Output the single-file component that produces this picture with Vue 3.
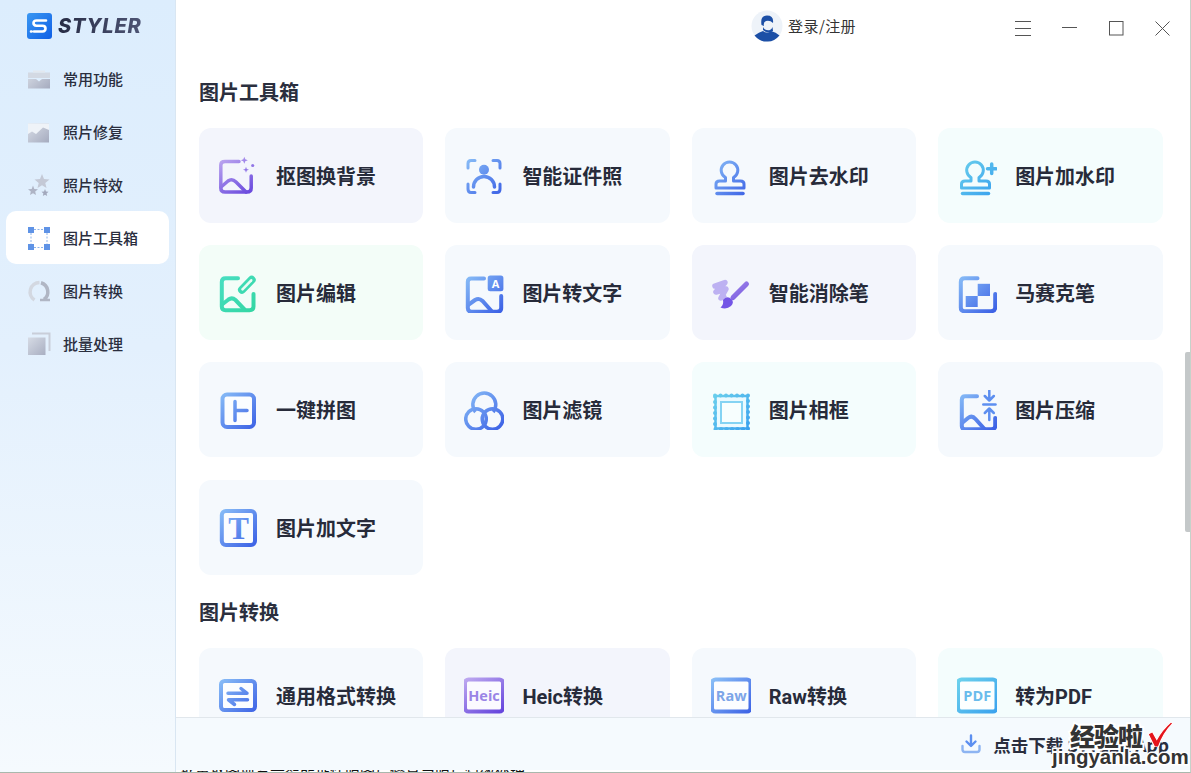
<template>
  <div class="window">
    <svg class="sprites" width="0" height="0" aria-hidden="true">
      <defs>
        <linearGradient id="g-blue" gradientUnits="userSpaceOnUse" x1="0" y1="0" x2="38" y2="40">
          <stop offset="0" stop-color="#8ec4f8" />
          <stop offset="1" stop-color="#3a5fe5" />
        </linearGradient>
        <linearGradient id="g-purple" gradientUnits="userSpaceOnUse" x1="4" y1="0" x2="30" y2="40">
          <stop offset="0" stop-color="#bfaaf0" />
          <stop offset="1" stop-color="#6746dd" />
        </linearGradient>
        <linearGradient id="g-green" gradientUnits="userSpaceOnUse" x1="0" y1="0" x2="38" y2="40">
          <stop offset="0" stop-color="#4adfc4" />
          <stop offset="1" stop-color="#33d6a2" />
        </linearGradient>
        <linearGradient id="g-cyan" gradientUnits="userSpaceOnUse" x1="0" y1="0" x2="40" y2="40">
          <stop offset="0" stop-color="#6fd4ec" />
          <stop offset="1" stop-color="#379fee" />
        </linearGradient>
        <linearGradient id="g-grey" gradientUnits="userSpaceOnUse" x1="0" y1="0" x2="22" y2="24">
          <stop offset="0" stop-color="#dfe4ec" />
          <stop offset="1" stop-color="#a3a9bd" />
        </linearGradient>
      </defs>

      <symbol id="i-cutout" viewBox="0 0 40 40">
        <g fill="none" stroke="url(#g-purple)" stroke-width="3.5" stroke-linecap="round">
          <path d="M21 5.500H7Q2.800 5.500 2.800 9V32Q2.800 36 7 36H29Q33.200 36 33.200 32V20" />
          <path d="M3 31L10 25Q14 22 18 26L28 36" />
        </g>
        <path fill="url(#g-purple)" d="M26.300 0.800L27.300 3.300L29.800 4.300L27.300 5.300L26.300 7.800L25.300 5.300L22.800 4.300L25.300 3.300ZM28 10.800L28.800 13L31 13.800L28.800 14.600L28 16.800L27.200 14.600L25 13.800L27.200 13Z" />
        <circle cx="34.700" cy="9.500" r="1.600" fill="url(#g-purple)" />
      </symbol>

      <symbol id="i-idphoto" viewBox="0 0 40 40">
        <g fill="none" stroke="url(#g-blue)" stroke-width="3" stroke-linecap="round">
          <path d="M11 4.500H7Q4 4.500 4 7.500V12M29 4.500H33Q36 4.500 36 7.500V12M4 28V33Q4 36.500 7 36.500H11M36 28V33Q36 36.500 33 36.500H29" />
          <path stroke-width="3.500" d="M9.500 31A10.500 10.500 0 0 1 30.500 31" />
        </g>
        <circle cx="20" cy="13.800" r="5" fill="url(#g-blue)" />
      </symbol>

      <symbol id="i-stamp" viewBox="0 0 40 40">
        <g fill="none" stroke="url(#g-blue)" stroke-width="3" stroke-linejoin="round" stroke-linecap="round">
          <path d="M14.500 25V21.500A8.300 8.300 0 1 1 22.500 21.500V25H29.500Q33 25 33 28V32H5V28Q5 25 8.500 25Z" />
          <path stroke-width="3.500" d="M6 37.500H32" />
        </g>
      </symbol>

      <symbol id="i-stamp-add" viewBox="0 0 40 40">
        <g fill="none" stroke="url(#g-cyan)" stroke-width="3" stroke-linejoin="round" stroke-linecap="round">
          <path d="M14 25V21.500A8.300 8.300 0 1 1 22 21.500V25H29Q32.500 25 32.500 28V32H4.500V28Q4.500 25 8 25Z" />
          <path stroke-width="3.500" d="M5.500 37.500H31.500" />
          <path stroke-width="3.500" d="M30.500 12.800H39M34.700 8V17.500" />
        </g>
      </symbol>

      <symbol id="i-edit" viewBox="0 0 40 40">
        <g fill="none" stroke="url(#g-green)" stroke-width="4" stroke-linecap="round">
          <path d="M20 5.300H7.500Q3.800 5.300 3.800 9V33.500Q3.800 37.200 7.500 37.200H31.500Q35.500 37.200 35.500 33.500V21" />
          <path d="M4 31.500L10.500 26.500Q14 24 17.500 27L26.500 36.500" />
          <path stroke-width="8" d="M24 16.800L33.700 6.800" />
          <path stroke="#eafcf5" stroke-width="2.600" d="M24.500 16.300L33.200 7.300" />
        </g>
      </symbol>

      <symbol id="i-totext" viewBox="0 0 40 40">
        <g fill="none" stroke="url(#g-blue)" stroke-width="4" stroke-linecap="round">
          <path d="M20 5.500H7Q3.800 5.500 3.800 9V35Q3.800 38.700 7.500 38.700H33Q37.200 38.700 37.200 35V23" />
          <path d="M4 32L11 27Q15 24.500 18.500 28L27.500 38" />
        </g>
        <rect x="23.700" y="2.500" width="15.700" height="15.700" rx="2.500" fill="url(#g-blue)" />
      </symbol>

      <symbol id="i-brush" viewBox="0 0 40 40">
        <g fill="none" stroke="#bdb1f2" stroke-width="5.500" stroke-linecap="round" stroke-linejoin="round">
          <path d="M4 13L14 9.500L5 19L15 16L10 25L13 24" />
        </g>
        <path d="M22 24.500L35.500 11" fill="none" stroke="url(#g-purple)" stroke-width="5" stroke-linecap="round" />
        <path d="M12 27Q16 22 20.500 26Q23.500 29.500 20 33Q15.500 37 9.500 34.500Q13 32 12 27Z" fill="#7354e6" />
      </symbol>

      <symbol id="i-mosaic" viewBox="0 0 40 40">
        <path fill="none" stroke="url(#g-blue)" stroke-width="4" stroke-linecap="round" d="M20.500 5.300H7.500Q3.800 5.300 3.800 9V34.500Q3.800 38.200 7.500 38.200H34Q38.200 38.200 38.200 34.500V21" />
        <rect x="20.700" y="10.800" width="12.300" height="12.200" fill="url(#g-blue)" />
        <rect x="8.700" y="23" width="12" height="11" fill="url(#g-blue)" />
      </symbol>

      <symbol id="i-collage" viewBox="0 0 40 40">
        <rect x="4.500" y="4.500" width="31.500" height="32.500" rx="4.500" fill="#fbfdff" stroke="url(#g-blue)" stroke-width="4" />
        <path d="M17 11.500V30.500M17 20.500H29" fill="none" stroke="url(#g-blue)" stroke-width="3.500" stroke-linecap="round" />
      </symbol>

      <symbol id="i-filter" viewBox="0 0 40 40">
        <g fill="none" stroke="url(#g-blue)" stroke-width="3.500">
          <path d="M11.500 22A11.500 11.500 0 1 1 29.100 22" />
          <circle cx="12" cy="29" r="10.300" />
          <circle cx="28.500" cy="29" r="10.300" />
        </g>
      </symbol>

      <symbol id="i-frame" viewBox="0 0 40 40">
        <rect x="4.500" y="6" width="32" height="32.500" fill="#eafaff" stroke="url(#g-cyan)" stroke-width="2.500" />
        <rect x="4" y="5.500" width="33" height="33.500" fill="none" stroke="url(#g-cyan)" stroke-width="4" stroke-linecap="round" stroke-dasharray="0 5.500" />
        <rect x="10" y="12" width="21" height="21" fill="#f7fefe" stroke="#84d3f3" stroke-width="2" />
      </symbol>

      <symbol id="i-compress" viewBox="0 0 40 40">
        <g fill="none" stroke="url(#g-blue)" stroke-width="4" stroke-linecap="round">
          <path d="M20 6.300H8Q4.800 6.300 4.800 10V36Q4.800 39.200 8 39.200H34Q38.200 39.200 38.200 36V28" />
          <path d="M5 33L11 28Q15 25 18.500 29L27.500 39" />
        </g>
        <g fill="none" stroke="#5d8ff0" stroke-width="2.500" stroke-linecap="round" stroke-linejoin="round">
          <path d="M32.300 0.500V10M27.800 6L32.300 10.500L36.800 6" />
          <path d="M26.300 14.500H38.500" />
          <path d="M32.300 30V19M27.800 23L32.300 18.500L36.800 23" />
        </g>
      </symbol>

      <symbol id="i-addtext" viewBox="0 0 40 40">
        <rect x="3.800" y="4" width="33.200" height="34" rx="4" fill="#fbfdff" stroke="url(#g-blue)" stroke-width="4" />
      </symbol>

      <symbol id="i-convert" viewBox="0 0 40 40">
        <rect x="3" y="5" width="34" height="29" rx="3.500" fill="#fbfdff" stroke="url(#g-blue)" stroke-width="4" />
        <path d="M10 17.300H29L23 12.500M29.500 23.800H10.500L16.500 28.500" fill="none" stroke="url(#g-blue)" stroke-width="3.500" stroke-linecap="round" stroke-linejoin="round" />
      </symbol>

      <symbol id="i-heic" viewBox="0 0 40 40">
        <rect x="1" y="3.500" width="38" height="32" rx="3.500" fill="#fbfaff" stroke="url(#g-purple)" stroke-width="4" />
      </symbol>

      <symbol id="i-raw" viewBox="0 0 40 40">
        <rect x="1" y="3.500" width="38.500" height="32" rx="3.500" fill="#fcfdff" stroke="url(#g-blue)" stroke-width="4" />
      </symbol>

      <symbol id="i-pdf" viewBox="0 0 40 40">
        <rect x="1" y="3.500" width="38.500" height="32" rx="3.500" fill="#fcffff" stroke="url(#g-cyan)" stroke-width="4" />
      </symbol>
    </svg>

    <div class="shell">
      <aside class="sidebar">
        <div class="logo">
          <span class="logo-mark">
            <svg width="25" height="26" viewBox="0 0 25 26">
              <path d="M19 7.500H9.500Q6.500 7.500 6.500 10T9.500 12.700H15.500Q18.500 12.700 18.500 15.500T15.500 18.500H7M4 18.500H4.600" fill="none" stroke="#fff" stroke-width="2.600" stroke-linecap="round" />
            </svg>
          </span>
          <span class="logo-text">STYLER</span>
        </div>
        <nav class="nav">
          <div
            v-for="item in navItems"
            :key="item.label"
            class="nav-item"
            :class="{ 'nav-item--active': item.active }"
          >
            <svg class="nav-icon" width="24" height="24" viewBox="0 0 24 24">
              <template v-if="item.icon === 'box'">
                <path d="M1 5.500H23V11H1Z" fill="#d3d9e3" />
                <path d="M6 5.500V3.500H18V5.500Z" fill="#e3e8ef" />
                <path d="M1 12H9L12 14.500L15 12H23V21.500H1Z" fill="url(#g-grey)" />
              </template>
              <template v-else-if="item.icon === 'photo'">
                <path d="M1 3.500H22V22.500H1Z" fill="url(#g-grey)" />
                <path d="M1 3.500H22V10L16 7.500L9 14L5 11.500L1 14Z" fill="#eff3f8" />
              </template>
              <template v-else-if="item.icon === 'stars'">
                <path d="M15 1L17 6L22.500 6.500L18.300 10L19.500 15L15 12.300L10.500 15L11.700 10L7.500 6.500L13 6Z" fill="#c4c9d6" />
                <path d="M6 12.500L7.300 16L11 16.300L8.200 18.500L9 22L6 20.200L3 22L3.800 18.500L1 16.300L4.700 16Z" fill="#aeb4c5" />
                <path d="M18 16L19 18.500L21.500 18.800L19.600 20.400L20.200 23L18 21.700L15.800 23L16.400 20.400L14.500 18.800L17 18.500Z" fill="#a3a9bd" />
              </template>
              <template v-else-if="item.icon === 'tools'">
                <path d="M4 7V18M20 7V18M7 3.500H17M7 21.500H17" fill="none" stroke="#8fb4ea" stroke-width="1" stroke-dasharray="2 1.500" />
                <rect x="1" y="1" width="6" height="6" fill="#5f93e6" />
                <rect x="17" y="1" width="6" height="6" fill="#5f93e6" />
                <rect x="1" y="18" width="6" height="6" fill="#5f93e6" />
                <rect x="17" y="18" width="6" height="6" fill="#5f93e6" />
              </template>
              <template v-else-if="item.icon === 'swap'">
                <path d="M7.500 21A9.500 9.500 0 0 1 12.500 3.500" fill="none" stroke="#d3d8e1" stroke-width="3.500" />
                <path d="M14 3.800A9.500 9.500 0 0 1 17 20.500" fill="none" stroke="#b0b6c4" stroke-width="3.500" />
                <path d="M13 21H23" stroke="#b0b6c4" stroke-width="2.500" />
              </template>
              <template v-else>
                <path d="M5 1.500H22.500V19" fill="none" stroke="#c9ced9" stroke-width="2" />
                <rect x="1" y="5.500" width="17.500" height="17.500" fill="url(#g-grey)" />
              </template>
            </svg>
            <span>{{ item.label }}</span>
          </div>
        </nav>
      </aside>

      <main class="main">
        <header class="topbar">
          <div class="user">
            <svg width="32" height="32" viewBox="0 0 32 32">
              <circle cx="16" cy="16" r="15.500" fill="#eef3f9" />
              <path d="M10.500 15Q9 5.500 16 5.500Q23 5.500 22 13Q19 10 15 11Q12 12 13 16Z" fill="#1c4fa6" />
              <path d="M12 17Q14 21 19 20Q21 19 21.500 17L22 21Q16 24 12 20Z" fill="#1c4fa6" />
              <path d="M3.500 25.500Q8 22 12 21Q16 24 20 21Q25 22 28.500 25.500Q23 32 16 31.500Q9 32 3.500 25.500Z" fill="#1c4fa6" />
            </svg>
            <span>登录/注册</span>
          </div>
          <div class="window-controls">
            <svg width="16" height="15" viewBox="0 0 16 15"><path d="M0 .500H16M0 7.500H16M0 14.500H16" stroke="#555" fill="none" /></svg>
            <svg width="15" height="15" viewBox="0 0 15 15"><path d="M0 6.500H15" stroke="#555" fill="none" /></svg>
            <svg width="15" height="15" viewBox="0 0 15 15"><rect x=".500" y=".500" width="13.500" height="13.500" stroke="#555" fill="none" /></svg>
            <svg width="15" height="15" viewBox="0 0 15 15"><path d="M.500 .500L14.500 14.500M14.500 .500L.500 14.500" stroke="#555" fill="none" /></svg>
          </div>
        </header>

        <div class="scroller">
          <section v-for="section in sections" :key="section.title" class="section">
            <h2>{{ section.title }}</h2>
            <div class="grid">
              <div
                v-for="card in section.cards"
                :key="card.label"
                class="card"
                :class="`card--${card.tone}`"
              >
                <svg class="card-icon" width="40" height="40">
                  <use :href="`#i-${card.icon}`" />
                  <text
                    v-if="card.mark"
                    :x="card.mark.x"
                    :y="card.mark.y"
                    :fill="card.mark.fill"
                    :font-size="card.mark.size"
                    :class="card.mark.serif ? 'icon-serif' : 'icon-text'"
                    text-anchor="middle"
                  >{{ card.mark.text }}</text>
                </svg>
                <span>{{ card.label }}</span>
              </div>
            </div>
          </section>
          <div class="scrollbar"></div>
        </div>

        <footer class="download">
          <svg width="20" height="20" viewBox="0 0 20 20">
            <path d="M10 1.500V11M5.500 7.500L10 12L14.500 7.500" fill="none" stroke="#5c8ff0" stroke-width="2.400" stroke-linecap="round" stroke-linejoin="round" />
            <path d="M1.500 12V15.500Q1.500 18 4 18H16Q18.500 18 18.500 15.500V12" fill="none" stroke="#8db4f2" stroke-width="2.400" stroke-linecap="round" />
          </svg>
          <span>点击下载 STYLER App</span>
        </footer>
        <div class="cut-line"><span>批量抠图换背景智能证件照图片修复与照片特效处理</span></div>

        <div class="watermark">
          <span class="wm-cn">经验啦</span>
          <svg class="wm-check" width="26" height="26" viewBox="0 0 24 24">
            <path d="M1 12L5 10L9 17Q14 8 22 1L24 2Q15 11 10.500 24L7 24Z" fill="#e5141c" stroke="#fff" stroke-width="1" />
          </svg>
          <span class="wm-en">jingyanla.com</span>
        </div>
      </main>
    </div>
  </div>
</template>

<script setup>
const navItems = [
  { label: '常用功能', icon: 'box' },
  { label: '照片修复', icon: 'photo' },
  { label: '照片特效', icon: 'stars' },
  { label: '图片工具箱', icon: 'tools', active: true },
  { label: '图片转换', icon: 'swap' },
  { label: '批量处理', icon: 'batch' }
]

const sections = [
  {
    title: '图片工具箱',
    cards: [
      { label: '抠图换背景', icon: 'cutout', tone: 'purple' },
      { label: '智能证件照', icon: 'idphoto', tone: 'blue' },
      { label: '图片去水印', icon: 'stamp', tone: 'blue' },
      { label: '图片加水印', icon: 'stamp-add', tone: 'cyan' },
      { label: '图片编辑', icon: 'edit', tone: 'green' },
      {
        label: '图片转文字',
        icon: 'totext',
        tone: 'blue',
        mark: { text: 'A', x: 31.5, y: 15, size: 11, fill: '#fff' }
      },
      { label: '智能消除笔', icon: 'brush', tone: 'purple' },
      { label: '马赛克笔', icon: 'mosaic', tone: 'blue' },
      { label: '一键拼图', icon: 'collage', tone: 'blue' },
      { label: '图片滤镜', icon: 'filter', tone: 'blue' },
      { label: '图片相框', icon: 'frame', tone: 'cyan' },
      { label: '图片压缩', icon: 'compress', tone: 'blue' },
      {
        label: '图片加文字',
        icon: 'addtext',
        tone: 'blue',
        mark: { text: 'T', x: 20.5, y: 32, size: 31, fill: 'url(#g-blue)', serif: true }
      }
    ]
  },
  {
    title: '图片转换',
    cards: [
      { label: '通用格式转换', icon: 'convert', tone: 'blue' },
      {
        label: 'Heic转换',
        icon: 'heic',
        tone: 'purple',
        mark: { text: 'Heic', x: 20, y: 25, size: 14.5, fill: '#9a84e6' }
      },
      {
        label: 'Raw转换',
        icon: 'raw',
        tone: 'blue',
        mark: { text: 'Raw', x: 20.2, y: 25, size: 14.5, fill: '#7da5e8' }
      },
      {
        label: '转为PDF',
        icon: 'pdf',
        tone: 'cyan',
        mark: { text: 'PDF', x: 20.2, y: 25, size: 14.5, fill: '#69bcec' }
      }
    ]
  }
]
</script>

<style>
html,
body {
  overflow: hidden;
}
</style>

<style scoped>
.window {
  width: 1191px;
  height: 773px;
  box-sizing: border-box;
  border-right: 1px solid #c6d2ca;
  border-bottom: 1px solid #a9b8ad;
  background: #fff;
  font-family: "Noto Sans CJK SC", "Noto Sans", sans-serif;
  color: #272b3a;
  overflow: hidden;
}

.sprites {
  position: absolute;
}

.icon-text {
  font-family: "Open Sans", "Noto Sans", sans-serif;
  font-weight: 700;
}

.icon-serif {
  font-family: "Liberation Serif", serif;
  font-weight: 700;
}

.shell {
  display: flex;
  height: 100%;
}

.sidebar {
  flex: 0 0 176px;
  box-sizing: border-box;
  border-right: 1px solid #d9e6f2;
  background: linear-gradient(180deg, #dcedfd 0%, #e3f0fd 45%, #f5fafe 100%);
  padding: 13px 6px 0;
}

.logo {
  display: flex;
  align-items: center;
  gap: 6px;
  padding-left: 21px;
  height: 26px;
}

.logo-mark {
  display: flex;
  width: 25px;
  height: 26px;
  border-radius: 3px;
  background: linear-gradient(135deg, #3a98f2 0%, #0f5fe6 100%);
}

.logo-text {
  font-family: "Inter", "Liberation Sans", sans-serif;
  font-size: 20px;
  font-weight: 800;
  font-style: italic;
  letter-spacing: 0.8px;
  background: linear-gradient(90deg, #272c45 0%, #4d5474 100%);
  -webkit-background-clip: text;
  background-clip: text;
  color: transparent;
}

.nav {
  margin-top: 13px;
}

.nav-item {
  display: flex;
  align-items: center;
  gap: 12px;
  height: 53px;
  padding-left: 21px;
  border-radius: 10px;
  font-size: 15px;
  font-weight: 500;
  color: #2a2e3e;
}

.nav-item--active {
  background: #fff;
}

.nav-icon {
  flex: none;
}

.main {
  position: relative;
  flex: 1;
  min-width: 0;
  display: flex;
  flex-direction: column;
}

.topbar {
  flex: 0 0 54px;
  display: flex;
  align-items: flex-start;
  justify-content: flex-end;
}

.user {
  display: flex;
  align-items: center;
  gap: 5px;
  margin-top: 10px;
  margin-right: 158.5px;
  font-size: 15px;
  letter-spacing: 0.4px;
  color: #333;
}

.user span {
  margin-top: -2px;
}

.window-controls {
  display: flex;
  gap: 31.5px;
  margin-top: 21px;
  margin-right: 20px;
}

.scroller {
  position: relative;
  flex: 1;
  min-height: 0;
  overflow: hidden;
  padding: 0 27.5px 0 23px;
}

.section {
  margin-top: 24px;
}

.section + .section {
  margin-top: 23.5px;
}

.section h2 {
  margin: 0 0 22px;
  font-size: 20px;
  line-height: 28px;
  font-weight: 700;
  color: #2b2f3e;
}

.grid {
  display: grid;
  grid-template-columns: repeat(4, 1fr);
  gap: 22.2px 22px;
}

.card {
  display: flex;
  align-items: center;
  gap: 18px;
  height: 95px;
  padding-left: 19px;
  border-radius: 12px;
  font-family: "Roboto", "Noto Sans CJK SC", sans-serif;
  font-size: 20px;
  font-weight: 700;
  color: #272b3a;
}

.card--purple {
  background: #f3f5fc;
}

.card--blue {
  background: #f5f9fd;
}

.card--green {
  background: #f3fdf8;
}

.card--cyan {
  background: #f4fdfd;
}

.card-icon {
  flex: none;
  overflow: visible;
}

.scrollbar {
  position: absolute;
  top: 298px;
  right: 0;
  width: 5px;
  height: 180px;
  background: #c4c8c9;
  border-radius: 2px 0 0 2px;
}

.download {
  flex: 0 0 53px;
  box-sizing: border-box;
  display: flex;
  align-items: center;
  justify-content: flex-end;
  gap: 12px;
  padding-right: 21px;
  border-top: 1px solid #e1e7ec;
  background: #f5fafe;
  font-size: 17.5px;
  font-weight: 700;
  color: #2a2e3e;
}

.cut-line {
  flex: 0 0 2px;
  overflow: hidden;
  padding-left: 4px;
  font-size: 15px;
  line-height: 2px;
  color: #111;
  white-space: nowrap;
}

.watermark {
  position: absolute;
  top: 719px;
  right: 12px;
  width: 126px;
  height: 52px;
}

.wm-cn {
  position: absolute;
  top: 0;
  left: 18px;
  font-size: 25px;
  line-height: 32px;
  font-weight: 900;
  letter-spacing: -1px;
  color: #333;
  -webkit-text-stroke: 4px #fff;
  paint-order: stroke fill;
  white-space: nowrap;
}

.wm-check {
  position: absolute;
  top: 2px;
  left: 95px;
}

.wm-en {
  position: absolute;
  top: 27px;
  left: 0;
  font-family: "Liberation Sans", sans-serif;
  font-size: 20.5px;
  line-height: 22px;
  font-weight: 700;
  color: #333;
  -webkit-text-stroke: 3px #fff;
  paint-order: stroke fill;
  white-space: nowrap;
}
</style>
